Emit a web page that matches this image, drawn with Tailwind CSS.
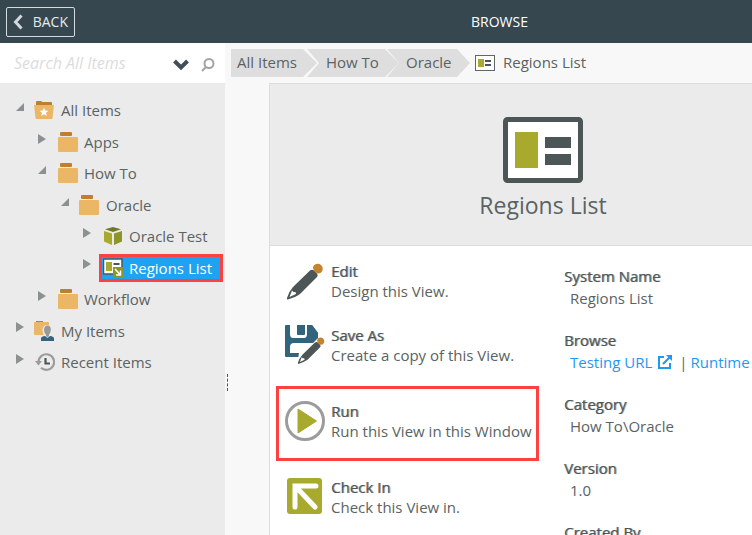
<!DOCTYPE html>
<html lang="en">
<head>
    <meta charset="utf-8">
    <title>Browse</title>
    <script src="https://cdn.jsdelivr.net/npm/@tailwindcss/browser@4"></script>
</head>
<body class="flex flex-col h-screen overflow-hidden bg-[#f8f8f8] text-[#5a6363] text-[15px] leading-5 font-['Open_Sans','Noto_Sans',sans-serif]">
    <!-- Shared icon shapes -->
    <svg class="hidden">
        <symbol id="open" viewBox="0 0 8 8"><path d="M8 0V8H0Z" fill="#8b9191"/></symbol>
        <symbol id="closed" viewBox="0 0 8 10"><path d="M0 0L8 5L0 10Z" fill="#8b9191"/></symbol>
        <symbol id="folder" viewBox="0 0 22 21">
            <rect x="3" width="12" height="4" rx="1" fill="#bf7f30"/>
            <rect x="1" y="5" width="20" height="15" rx="1" fill="#ebb666"/>
        </symbol>
        <symbol id="view" viewBox="0 0 80 66">
            <rect x="2.5" y="2.5" width="75" height="61" rx="2" fill="#fff" stroke="#4d5656" stroke-width="5"/>
            <rect x="12" y="15" width="23" height="36" fill="#a8aa2e"/>
            <path d="M42 20h26v11H42zM42 37h26v11H42z" fill="#4d5656"/>
        </symbol>
        <symbol id="pencil" viewBox="0 0 38 38">
            <path d="M25 7.500Q27 6 29 7.500L32 10.500Q33.500 12.500 32 14L15 31Q11 34 2.500 36.500Q1.500 36.500 2 35Q3.500 29 8 24Z" fill="#4d5656"/>
            <path d="M4.500 34L7 27.500L8.500 29L10.500 29L11 31Z" fill="#fff"/>
            <path d="M28 4Q30 0 34.500 1Q38.500 3 37.500 7.500Q36 11 32.500 10.500Q28 8 28 4Z" fill="#c4832e"/>
        </symbol>
    </svg>

    <header class="flex items-center h-[43px] shrink-0 px-1.5 bg-[#37474f] text-white text-sm">
        <button class="flex items-center justify-between w-[69px] h-[30px] px-1.5 border border-[#d5dadc] rounded-xs text-[#e8ebec]">
            <svg class="w-2.5 h-4" viewBox="0 0 10 16"><path d="M8.500 1.500L2.500 8L8.500 14.500" fill="none" stroke="#d3d8da" stroke-width="3"/></svg>
            BACK
        </button>
        <h1 class="flex-1 pl-[178px] text-center">BROWSE</h1>
    </header>

    <div class="flex flex-1 min-h-0">
        <aside class="w-[225px] shrink-0 bg-[#ebebeb]">
            <form class="flex items-center h-10 bg-white pl-3.5 pr-2.5">
                <input type="text" aria-label="Search All Items" placeholder="Search All Items" class="flex-1 min-w-0 italic text-base leading-5 placeholder:text-[#dcdcdc] outline-none">
                <button type="button" aria-label="Search options" class="mr-3 mt-1">
                    <svg class="w-4 h-3" viewBox="0 0 16 12"><path d="M1.500 2L8 8.500L14.500 2" fill="none" stroke="#434e58" stroke-width="4"/></svg>
                </button>
                <button type="button" aria-label="Search" class="mt-1">
                    <svg class="w-3.5 h-3.5" viewBox="0 0 14 14" fill="none" stroke="#a3a3a3" stroke-width="2"><circle cx="8" cy="5.500" r="4.500"/><path d="M5 9L1 13"/></svg>
                </button>
            </form>

            <nav class="pt-3">
                <ul>
                    <li>
                        <div class="flex items-center h-[31px] pl-4">
                            <svg class="w-2 h-2 mb-2"><use href="#open"/></svg>
                            <svg class="w-5 h-[18px] ml-2.5 mr-[7px] mb-0.5" viewBox="0 0 20 18">
                                <path d="M2 1Q2 0 3 0H7L8.500 1H17Q18 1 18 2V4H2Z" fill="#bf7f30"/>
                                <path d="M0 4H20L18.500 17Q18.500 18 17.500 18H2.500Q1.500 18 1.500 17Z" fill="#ebb666"/>
                                <path d="M10 6.500L11.200 9.500L14.500 9.800L12 11.800L12.800 15L10 13.200L7.200 15L8 11.800L5.500 9.800L8.800 9.500Z" fill="#fff"/>
                            </svg>
                            <a href="#" class="mb-0.5">All Items</a>
                        </div>
                        <ul class="pt-px">
                            <li class="flex items-center h-[31px] pl-[38px]">
                                <svg class="w-2 h-2.5 mb-2"><use href="#closed"/></svg>
                                <svg class="w-[22px] h-[21px] ml-[11px] mr-[5px]"><use href="#folder"/></svg>
                                <a href="#" class="mb-0.5">Apps</a>
                            </li>
                            <li>
                                <div class="flex items-center h-[31px] pl-[38px]">
                                    <svg class="w-2 h-2 mb-2"><use href="#open"/></svg>
                                    <svg class="w-[22px] h-[21px] ml-[11px] mr-[5px]"><use href="#folder"/></svg>
                                    <a href="#" class="mb-0.5">How To</a>
                                </div>
                                <ul class="pt-px">
                                    <li>
                                        <div class="flex items-center h-[31px] pl-[61px]">
                                            <svg class="w-2 h-2 mb-2"><use href="#open"/></svg>
                                            <svg class="w-[22px] h-[21px] ml-[9px] mr-[6px]"><use href="#folder"/></svg>
                                            <a href="#" class="mb-0.5">Oracle</a>
                                        </div>
                                        <ul>
                                            <li class="flex items-center h-[31px] pl-[83px]">
                                                <svg class="w-2 h-2.5 mb-2"><use href="#closed"/></svg>
                                                <svg class="w-[18px] h-[18px] ml-[13px] mr-[7px] mb-0.5" viewBox="0 0 18 18">
                                                    <path d="M9 0L17 2.300L9 5L1 2.300Z" fill="#6f7a27"/>
                                                    <path d="M0 4L8 6.500V18L0 14.500Z" fill="#a8aa2e"/>
                                                    <path d="M18 4L10 6.500V18L18 14.500Z" fill="#8d9429"/>
                                                </svg>
                                                <a href="#" class="mb-0.5">Oracle Test</a>
                                            </li>
                                            <li class="flex items-center h-8 pl-[83px]">
                                                <svg class="w-2 h-2.5 mb-2"><use href="#closed"/></svg>
                                                <a href="#" aria-current="page" class="flex items-center w-[124px] h-7 ml-2 pl-px border-3 border-[#fb4141] bg-[#1ea3f2] text-white">
                                                    <svg class="w-5 h-5 mr-[6px]" viewBox="0 0 20 20">
                                                        <rect x=".5" y="1" width="18.500" height="15" fill="#fff" stroke="#4d5656" stroke-width="1.500"/>
                                                        <rect x="3" y="4" width="6" height="9" fill="#a8aa2e"/>
                                                        <path d="M10.500 5H16.500V7H10.500z" fill="#4d5656"/>
                                                        <rect x="10" y="9" width="10" height="10.500" fill="#8d9429"/>
                                                        <path d="M12 11L17 16.500M17.500 12.500V17H13" fill="none" stroke="#fff" stroke-width="1.500"/>
                                                    </svg>
                                                    Regions List
                                                </a>
                                            </li>
                                        </ul>
                                    </li>
                                </ul>
                            </li>
                            <li class="flex items-center h-[31px] pl-[38px]">
                                <svg class="w-2 h-2.5 mb-2"><use href="#closed"/></svg>
                                <svg class="w-[22px] h-[21px] ml-[11px] mr-[5px]"><use href="#folder"/></svg>
                                <a href="#" class="mb-0.5">Workflow</a>
                            </li>
                        </ul>
                    </li>
                    <li class="flex items-center h-8 pl-4">
                        <svg class="w-2 h-2.5 mb-2"><use href="#closed"/></svg>
                        <svg class="w-5 h-5 ml-2.5 mr-[7px]" viewBox="0 0 20 20">
                            <rect x="2" width="7" height="2" fill="#bf7f30"/>
                            <rect y="1" width="15" height="13" rx="1" fill="#ebb666"/>
                            <path d="M6 20V17.500Q6 15 10 14.500Q8.500 12 8.500 9Q9 4 13 4Q17.500 4 17.500 9Q17.500 12 16 14.500Q20 15 20 17.500V20Z" fill="#ebebeb"/>
                            <path d="M7 20V17.500Q7 15.500 11 15L13.500 17L16 15Q20 15.500 20 17.500V20Z" fill="#33647e"/>
                            <path d="M13.500 4.500Q17 4.500 16.800 9Q16.500 12 15 13.500V15L13.500 16.500L12 15V13.500Q10 12 10 9Q10 4.500 13.500 4.500Z" fill="#999"/>
                        </svg>
                        <a href="#">My Items</a>
                    </li>
                    <li class="flex items-center h-[31px] pl-4">
                        <svg class="w-2 h-2.5 mb-2"><use href="#closed"/></svg>
                        <svg class="w-5 h-[18px] ml-[11px] mr-[6px] mb-0.5" viewBox="0 0 20 18" fill="none">
                            <path d="M3.500 9A7.800 7.800 0 1 1 6 14.800" stroke="#9c9c9c" stroke-width="2.200"/>
                            <path d="M0 8H7L3.500 12.500Z" fill="#9c9c9c"/>
                            <path d="M10.500 5V10.500H15" stroke="#4d5656" stroke-width="2.200"/>
                        </svg>
                        <a href="#" class="mb-0.5">Recent Items</a>
                    </li>
                </ul>
            </nav>
        </aside>

        <!-- Splitter grip -->
        <div class="w-[5px] shrink-0 pt-[331px] pl-0.5">
            <div class="h-[17px] w-px border-l border-dashed border-[#4d5656]"></div>
        </div>

        <main class="flex flex-col flex-1 min-w-0">
            <nav class="flex items-center h-10 shrink-0 pl-px">
                <a href="#" class="flex items-center h-7 w-[86px] pb-0.5 pl-1.5 bg-[#dedede] [clip-path:polygon(0_0,72px_0,100%_50%,72px_100%,0_100%)]">All Items</a>
                <a href="#" class="flex items-center h-7 w-[92px] -ml-2.5 pb-0.5 pl-[19px] bg-[#dedede] [clip-path:polygon(0_0,78px_0,100%_50%,78px_100%,0_100%,12px_50%)]">How To</a>
                <a href="#" class="flex items-center h-7 w-[83px] -ml-3 pb-0.5 pl-[19px] bg-[#dedede] [clip-path:polygon(0_0,70px_0,100%_50%,70px_100%,0_100%,12px_50%)]">Oracle</a>
                <svg class="w-5 h-4 ml-[5px] mr-2" viewBox="0 0 20 16">
                    <rect x=".5" y=".5" width="19" height="15" fill="#fff" stroke="#5d6767"/>
                    <rect x="3" y="4" width="6" height="8" fill="#a8aa2e"/>
                    <path d="M10 5h6v2h-6zM10 9h6v2h-6z" fill="#4d5656"/>
                </svg>
                <span class="pb-0.5">Regions List</span>
            </nav>

            <section class="flex flex-col flex-1 min-h-0 ml-[39px] border-l border-t border-[#dcdcdc] bg-white overflow-hidden">
                <div class="flex flex-col items-center shrink-0 h-[162px] pt-[33px] pr-2 pl-[72px] border-b border-[#dcdcdc] bg-[#ebebeb]">
                    <svg class="w-20 h-[66px]"><use href="#view"/></svg>
                    <h2 class="mt-1 text-[23px] leading-9">Regions List</h2>
                </div>

                <div class="flex whitespace-nowrap">
                    <div class="w-[269px] shrink-0 pt-[15px] pl-1.5">
                        <button class="flex w-full h-16 pl-[9px] text-left">
                            <svg class="w-[38px] h-[38px] mr-2 mt-0.5"><use href="#pencil"/></svg>
                            <span><strong class="block font-normal text-[#4d5656] [text-shadow:1px_0_0_#4d565699]">Edit</strong>Design this View.</span>
                        </button>
                        <button class="flex w-full h-[61px] pl-[9px] text-left">
                            <svg class="w-10 h-10 mr-1.5" viewBox="0 0 40 40">
                                <path d="M1 0H27L33 8V15L14 32H1Q0 32 0 31V1Q0 0 1 0Z" fill="#33647e"/>
                                <path d="M5 0H12V9Q12 10 13 10H19Q20 10 20 9V0H22V9Q22 13 19 13H8Q5 13 5 9Z" fill="#fff"/>
                                <path d="M5 28V22Q5 18 9 18H28V14L40 12V40H12L14 28Z" fill="#fff"/>
                                <path d="M26 0H27L33 8V13L28 18H26Z" fill="#33647e"/>
                                <svg x="11" y="12" width="29" height="28"><use href="#pencil"/></svg>
                            </svg>
                            <span><strong class="block font-normal text-[#4d5656] [text-shadow:1px_0_0_#4d565699]">Save As</strong>Create a copy of this View.</span>
                        </button>
                        <button class="flex w-[263px] h-[75px] pt-[12px] pl-1.5 border-3 border-[#fb4141] text-left">
                            <svg class="w-10 h-10 mr-1.5 shrink-0" viewBox="0 0 40 40">
                                <circle cx="20" cy="20" r="18.500" fill="#fff" stroke="#9c9c9c" stroke-width="3"/>
                                <path d="M13 8L31.500 20L13 32Z" fill="#a8aa2e" stroke="#a8aa2e" stroke-linejoin="round"/>
                            </svg>
                            <span><strong class="block font-normal text-[#4d5656] [text-shadow:1px_0_0_#4d565699]">Run</strong>Run this View in this Window</span>
                        </button>
                        <button class="flex w-full mt-4 pl-[9px] text-left">
                            <svg class="w-[38px] h-[38px] mr-2" viewBox="0 0 38 38">
                                <rect x="2" y="1" width="35" height="36" rx="3" fill="#a8aa2e"/>
                                <path d="M10 30V9H31M11 10L30 30" fill="none" stroke="#fff" stroke-width="5" stroke-linecap="round"/>
                            </svg>
                            <span><strong class="block font-normal text-[#4d5656] [text-shadow:1px_0_0_#4d565699]">Check In</strong>Check this View in.</span>
                        </button>
                    </div>

                    <dl class="flex-1 pt-5 pl-[25px]">
                        <dt class="text-[#4d5656] [text-shadow:1px_0_0_#4d565699]">System Name</dt>
                        <dd class="h-11 pt-0.5 pl-1.5">Regions List</dd>
                        <dt class="text-[#4d5656] [text-shadow:1px_0_0_#4d565699]">Browse</dt>
                        <dd class="flex h-11 pt-0.5 pl-1.5">
                            <a href="#" class="flex text-[#1e98f5]">Testing URL
                                <svg class="w-3.5 h-3.5 ml-1.5 mt-[3px]" viewBox="0 0 14 14" fill="none" stroke="#1e98f5" stroke-width="2"><path d="M6 2H1V13H12V8M5 9L12 2"/><path d="M8 0H14V6Z" fill="#1e98f5" stroke="none"/></svg>
                            </a>
                            <span class="ml-[7px] mr-[3px]">|</span>
                            <a href="#" class="text-[#1e98f5]">Runtime</a>
                        </dd>
                        <dt class="text-[#4d5656] [text-shadow:1px_0_0_#4d565699]">Category</dt>
                        <dd class="h-11 pt-0.5 pl-1.5">How To\Oracle</dd>
                        <dt class="text-[#4d5656] [text-shadow:1px_0_0_#4d565699]">Version</dt>
                        <dd class="h-11 pt-0.5 pl-1.5">1.0</dd>
                        <dt class="text-[#4d5656] [text-shadow:1px_0_0_#4d565699]">Created By</dt>
                    </dl>
                </div>
            </section>
        </main>
    </div>
</body>
</html>
